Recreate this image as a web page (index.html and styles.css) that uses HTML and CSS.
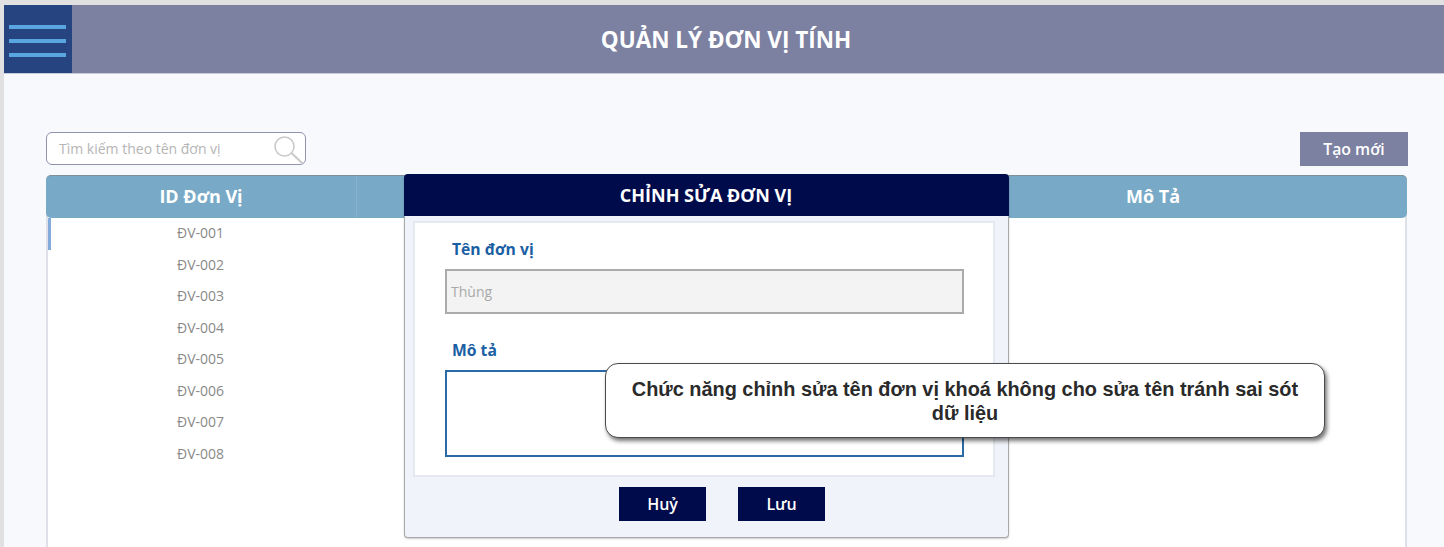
FILE: index.html
```html
<!DOCTYPE html>
<html lang="vi">
<head>
    <meta charset="UTF-8">
    <meta name="viewport" content="width=device-width, initial-scale=1.0">
    <title>Quản lý đơn vị tính</title>
    <link rel="stylesheet" href="styles.css">
</head>
<body>
    <div class="app">
        <header class="topbar">
            <button class="menu-btn" type="button" aria-label="Menu">
                <span></span><span></span><span></span>
            </button>
            <h1>QUẢN LÝ ĐƠN VỊ TÍNH</h1>
        </header>

        <main class="content">
            <div class="toolbar">
                <div class="search">
                    <span class="search-text">Tìm kiếm theo tên đơn vị</span>
                    <svg class="search-icon" width="32" height="30" viewBox="0 0 32 30" fill="none" stroke="#c9c9c9">
                        <circle cx="11.5" cy="11.5" r="9.5" stroke-width="1.6"/>
                        <path d="M18.5 18 L30 29" stroke-width="2"/>
                    </svg>
                </div>
                <button class="create-btn" type="button">Tạo mới</button>
            </div>

            <section class="table">
                <div class="table-head">
                    <div class="col-id">ID Đơn Vị</div>
                    <div class="col-name"></div>
                    <div class="col-desc">Mô Tả</div>
                </div>
                <div class="table-body">
                    <div class="row active">ĐV-001</div>
                    <div class="row">ĐV-002</div>
                    <div class="row">ĐV-003</div>
                    <div class="row">ĐV-004</div>
                    <div class="row">ĐV-005</div>
                    <div class="row">ĐV-006</div>
                    <div class="row">ĐV-007</div>
                    <div class="row">ĐV-008</div>
                </div>
            </section>
        </main>

        <div class="modal">
            <div class="modal-title">CHỈNH SỬA ĐƠN VỊ</div>
            <div class="modal-body">
                <label class="field-label">Tên đơn vị</label>
                <div class="input-locked">Thùng</div>
                <label class="field-label second">Mô tả</label>
                <div class="input-desc"></div>
            </div>
            <div class="modal-actions">
                <button class="action-btn" type="button">Huỷ</button>
                <button class="action-btn" type="button">Lưu</button>
            </div>
        </div>

        <div class="note">Chức năng chỉnh sửa tên đơn vị khoá không cho sửa tên tránh sai sót dữ liệu</div>
    </div>
</body>
</html>
```

FILE: styles.css
```css
html, body {
    margin: 0;
    height: 100%;
    overflow: hidden;
}
body {
    font-family: "Open Sans", sans-serif;
    background-color: #e1e1e1;
    padding: 5px 0 0 4px;
    box-sizing: border-box;
}
button {
    font-family: inherit;
    border: none;
    padding: 0;
}
.app {
    position: relative;
    height: 100%;
    background-color: #f8f9fd;
}
.topbar {
    display: flex;
    height: 69px;
    background-color: #7c80a1;
    border-bottom: 1px solid #c9cbd8;
    box-sizing: border-box;
}
.menu-btn {
    width: 68px;
    flex: none;
    background-color: #254480;
    display: flex;
    flex-direction: column;
    justify-content: center;
    gap: 10px;
    padding: 4px 6px 0 5px;
}
.menu-btn span {
    display: block;
    height: 4px;
    background-color: #59a5e0;
}
.topbar h1 {
    flex: 1;
    margin: 0;
    padding-right: 64px;
    text-align: center;
    align-self: center;
    color: #fff;
    font-size: 22.5px;
    font-weight: 700;
}
.content {
    padding: 58px 36px 0 42px;
}
.toolbar {
    display: flex;
    justify-content: space-between;
    align-items: flex-start;
    height: 43px;
}
.search {
    width: 260px;
    height: 33px;
    box-sizing: border-box;
    border: 1px solid #8f93ae;
    border-radius: 6px;
    background-color: #fff;
    display: flex;
    align-items: center;
    justify-content: space-between;
    padding: 0 0 0 12px;
    overflow: hidden;
}
.search-text {
    color: #b5b5b5;
    font-size: 14px;
}
.search-icon {
    margin-top: 2px;
    flex: none;
}
.create-btn {
    width: 108px;
    height: 34px;
    background-color: #7c80a1;
    color: #fff;
    font-size: 15.8px;
    font-weight: 600;
}
.table {
    width: 1361px;
    background-color: #fff;
    border-radius: 5px 5px 0 0;
    height: 372px;
    border: solid #dfe1ea;
    border-width: 0 2px;
    box-sizing: border-box;
}
.table-head {
    display: grid;
    grid-template-columns: 311px 542px 1fr;
    height: 43px;
    margin: 0 -2px;
    background-color: #78a9c6;
    border-top: 1px solid #7f8f9a;
    border-radius: 5px;
    box-sizing: border-box;
    color: #fff;
    font-size: 18px;
    font-weight: 700;
    line-height: 41px;
    text-align: center;
}
.col-id {
    border-right: 1px solid #86b1cb;
}
.row {
    height: 31.5px;
    line-height: 29px;
    width: 305px;
    text-align: center;
    color: #8a8a8a;
    font-size: 14px;
}
.row.active {
    border-left: 3px solid #82aadb;
    width: 299px;
}
.modal {
    position: absolute;
    left: 400px;
    top: 169px;
    width: 605px;
    height: 364px;
    box-sizing: border-box;
    background-color: #f0f3f9;
    border: 1px solid #a9a9a9;
    border-top: none;
    border-radius: 4px;
    box-shadow: 0 1px 2px rgba(0, 0, 0, 0.2);
}
.modal-title {
    height: 42px;
    margin: 0 -1px;
    padding-right: 1px;
    background-color: #000b4b;
    border-radius: 4px 4px 0 0;
    color: #fff;
    font-size: 18px;
    font-weight: 700;
    line-height: 42px;
    text-align: center;
}
.modal-body {
    margin: 5px 13px 0 8px;
    height: 256px;
    box-sizing: border-box;
    background-color: #fff;
    border: 2px solid #e5e8ef;
    padding: 15px 29px 0 30px;
}
.field-label {
    display: block;
    color: #1a5ea4;
    font-size: 15.7px;
    font-weight: 700;
    line-height: 22px;
    padding-left: 7px;
}
.field-label.second {
    margin-top: 25px;
}
.input-locked {
    margin-top: 9px;
    height: 45px;
    box-sizing: border-box;
    border: 2px solid #ababab;
    background-color: #f3f3f3;
    color: #a9a9a9;
    font-size: 14px;
    line-height: 41px;
    padding-left: 4px;
}
.input-desc {
    margin-top: 9px;
    height: 87px;
    box-sizing: border-box;
    border: 2px solid #2a6aa6;
    background-color: #fff;
}
.modal-actions {
    display: flex;
    justify-content: center;
    gap: 32px;
    margin-top: 10px;
    padding-left: 31px;
}
.action-btn {
    width: 87px;
    height: 34px;
    background-color: #000b4b;
    color: #fff;
    font-size: 16px;
    font-weight: 600;
}
.note {
    position: absolute;
    left: 601px;
    top: 358px;
    width: 720px;
    height: 75px;
    box-sizing: border-box;
    padding: 13px 16px 0;
    background-color: #fff;
    border: 1px solid #4a4a4a;
    border-radius: 13px;
    box-shadow: 2px 3px 4px rgba(0, 0, 0, 0.55);
    font-family: "Liberation Sans", Arial, sans-serif;
    font-size: 19.9px;
    font-weight: 700;
    line-height: 24px;
    color: #2a2a2a;
    text-align: center;
}
```
